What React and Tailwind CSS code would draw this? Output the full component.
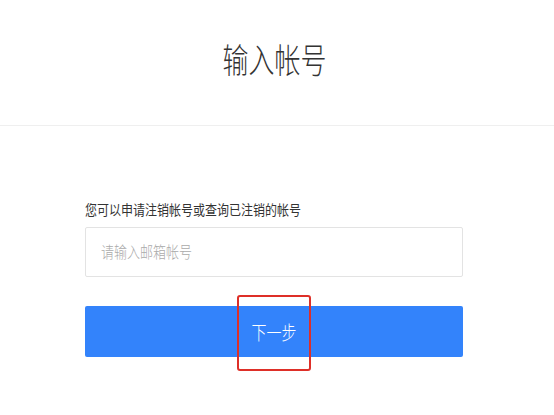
import React from "react";

export default function App() {
  const font = { fontFamily: '"Noto Sans CJK SC", "Noto Sans", sans-serif' };
  return (
    <div className="w-[554px] h-[415px] bg-white overflow-hidden" style={font}>
      <div className="h-[126px] border-b border-[#efefef] flex items-center justify-center">
        <h1 className="text-[26px] leading-none font-light text-[#333] scale-y-[1.3] mt-[-8px] ml-[-5px]">输入帐号</h1>
      </div>
      <div className="ml-[85px] w-[378px] pt-[77px] flex flex-col">
        <p className="text-[12px] leading-none text-[#333] scale-y-[1.15] origin-left">
          您可以申请注销帐号或查询已注销的帐号
        </p>
        <div className="mt-[12px] h-[50px] border border-[#e3e3e3] rounded-[2px] flex items-center pl-[15px]">
          <span className="text-[13px] font-light text-[#aaa] scale-y-[1.2]">请输入邮箱帐号</span>
        </div>
        <div className="relative mt-[29px]">
          <button className="w-full h-[51px] rounded-[2px] bg-[#3383fb] text-white text-[15px] font-light flex items-center justify-center">
            <span className="scale-y-[1.3] mt-[2px]">下一步</span>
          </button>
          <div className="absolute left-[152px] top-[-11px] w-[74px] h-[76px] border-2 border-[#de2f28] rounded-[3px]" />
        </div>
      </div>
    </div>
  );
}
